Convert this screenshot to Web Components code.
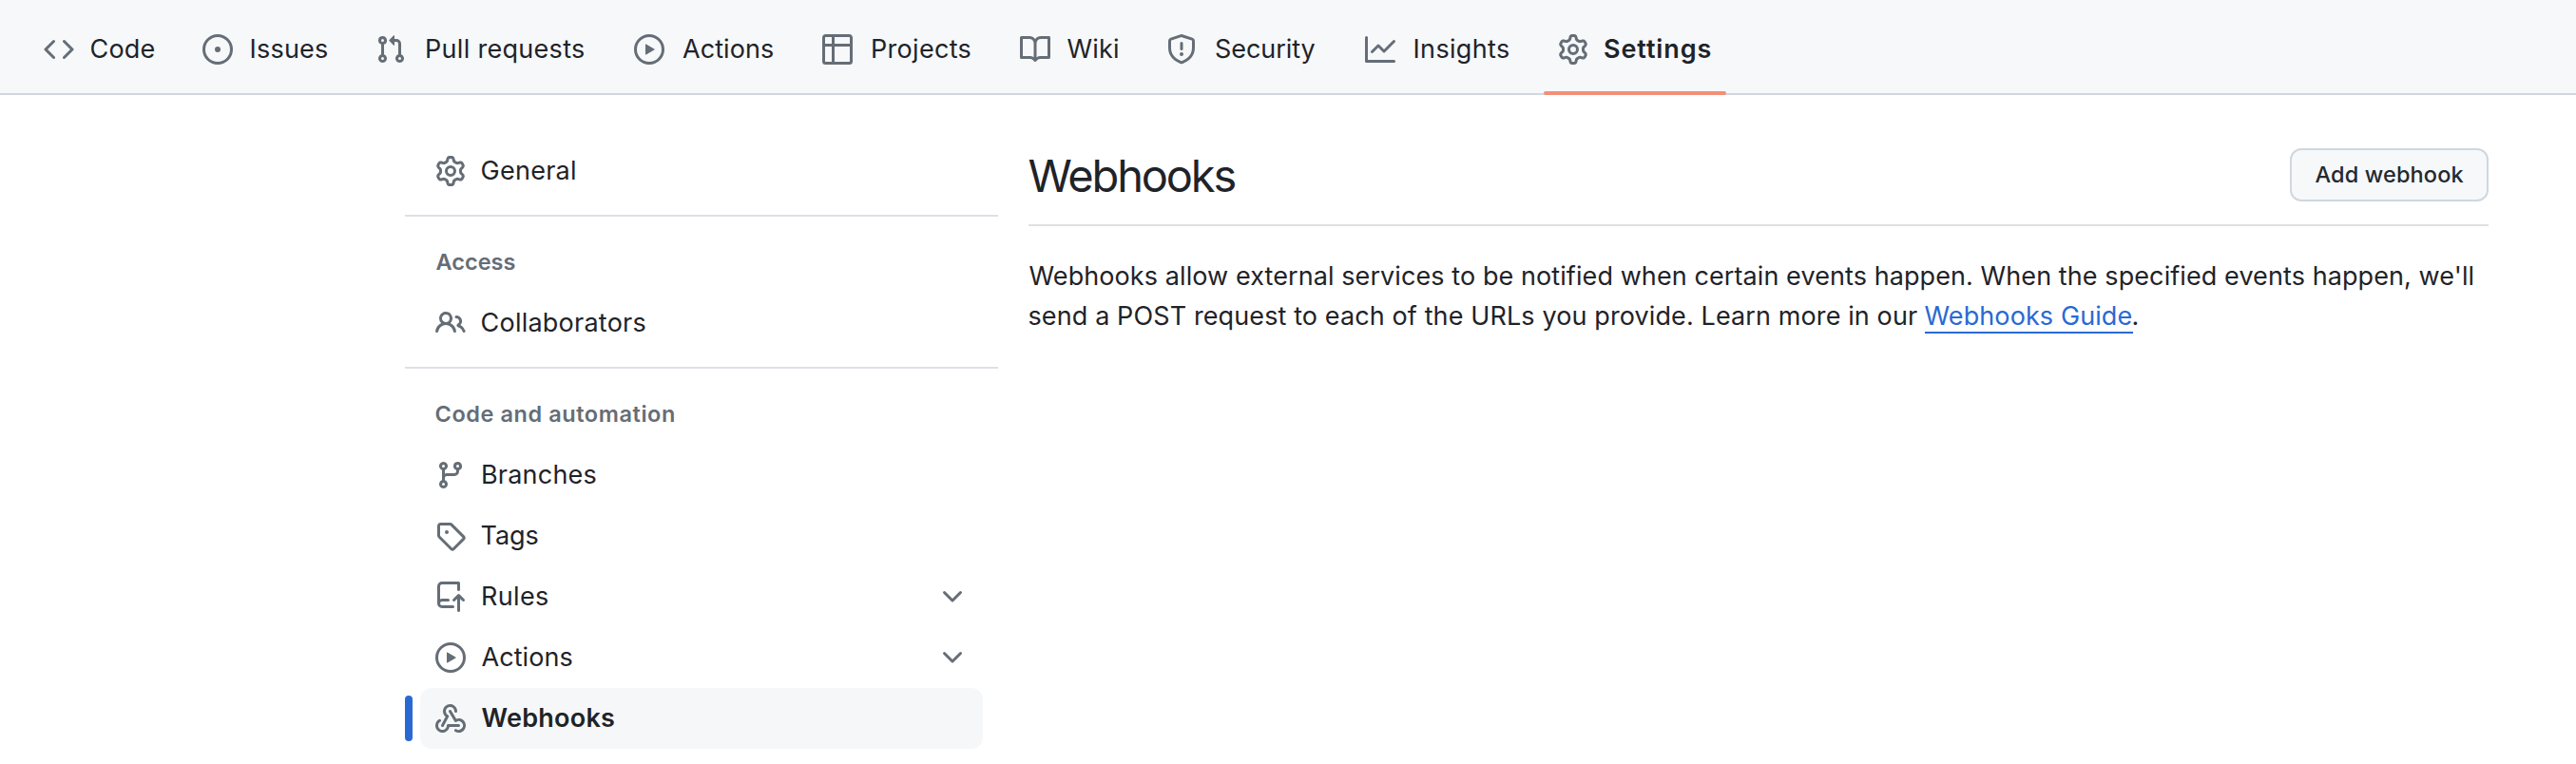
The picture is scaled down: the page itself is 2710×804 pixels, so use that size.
<!DOCTYPE html>
<html lang="en">
<head>
<meta charset="utf-8">
<title>Webhooks settings</title>
<style>
body { margin: 0; background: #fff; color: #1f2328; font-family: Inter, "Liberation Sans", sans-serif; }
</style>
</head>
<body>
<settings-page></settings-page>
<script>
const ICONS = {
  code: 'm11.28 3.22 4.25 4.25a.75.75 0 0 1 0 1.06l-4.25 4.25a.749.749 0 0 1-1.275-.326.749.749 0 0 1 .215-.734L13.94 8l-3.72-3.72a.749.749 0 0 1 .326-1.275.749.749 0 0 1 .734.215Zm-6.56 0a.751.751 0 0 1 1.042.018.751.751 0 0 1 .018 1.042L2.06 8l3.72 3.72a.749.749 0 0 1-.326 1.275.749.749 0 0 1-.734-.215L.47 8.53a.75.75 0 0 1 0-1.06Z',
  issue: 'M8 9.5a1.5 1.5 0 1 0 0-3 1.5 1.5 0 0 0 0 3ZM8 0a8 8 0 1 1 0 16A8 8 0 0 1 8 0ZM1.5 8a6.5 6.5 0 1 0 13 0 6.5 6.5 0 0 0-13 0Z',
  pull: 'M1.5 3.25a2.25 2.25 0 1 1 3 2.122v5.256a2.251 2.251 0 1 1-1.5 0V5.372A2.25 2.25 0 0 1 1.5 3.25Zm5.677-.177L9.573.677A.25.25 0 0 1 10 .854V2.5h1A2.5 2.5 0 0 1 13.5 5v5.628a2.251 2.251 0 1 1-1.5 0V5a1 1 0 0 0-1-1h-1v1.646a.25.25 0 0 1-.427.177L7.177 3.427a.25.25 0 0 1 0-.354ZM3.75 2.5a.75.75 0 1 0 0 1.5.75.75 0 0 0 0-1.5Zm0 9.5a.75.75 0 1 0 0 1.5.75.75 0 0 0 0-1.5Zm8.25.75a.75.75 0 1 0 1.5 0 .75.75 0 0 0-1.5 0Z',
  play: 'M8 0a8 8 0 1 1 0 16A8 8 0 0 1 8 0ZM1.5 8a6.5 6.5 0 1 0 13 0 6.5 6.5 0 0 0-13 0Zm4.879-2.773 4.264 2.559a.25.25 0 0 1 0 .428l-4.264 2.559A.25.25 0 0 1 6 10.559V5.442a.25.25 0 0 1 .379-.215Z',
  table: 'M0 1.75C0 .784.784 0 1.75 0h12.5C15.216 0 16 .784 16 1.75v12.5A1.75 1.75 0 0 1 14.25 16H1.75A1.75 1.75 0 0 1 0 14.25ZM6.5 6.5v8h7.75a.25.25 0 0 0 .25-.25V6.5Zm8-1.5V1.75a.25.25 0 0 0-.25-.25H6.5V5Zm-13 1.5v7.75c0 .138.112.25.25.25H5v-8ZM5 5V1.5H1.75a.25.25 0 0 0-.25.25V5Z',
  book: 'M0 1.75A.75.75 0 0 1 .75 1h4.253c1.227 0 2.317.59 3 1.501A3.743 3.743 0 0 1 11.006 1h4.245a.75.75 0 0 1 .75.75v10.5a.75.75 0 0 1-.75.75h-4.507a2.25 2.25 0 0 0-1.591.659l-.622.621a.75.75 0 0 1-1.06 0l-.622-.621A2.25 2.25 0 0 0 5.258 13H.75a.75.75 0 0 1-.75-.75Zm7.251 10.324.004-5.073-.002-2.253A2.25 2.25 0 0 0 5.003 2.5H1.5v9h3.757a3.75 3.75 0 0 1 1.994.574ZM8.755 4.75l-.004 7.322a3.752 3.752 0 0 1 1.992-.572H14.5v-9h-3.495a2.25 2.25 0 0 0-2.25 2.25Z',
  shield: 'M7.467.133a1.748 1.748 0 0 1 1.066 0l5.25 1.68A1.75 1.75 0 0 1 15 3.48V7c0 1.566-.32 3.182-1.303 4.682-.983 1.498-2.585 2.813-5.032 3.855a1.697 1.697 0 0 1-1.33 0c-2.447-1.042-4.049-2.357-5.032-3.855C1.32 10.182 1 8.566 1 7V3.48a1.75 1.75 0 0 1 1.217-1.667Zm.61 1.429a.25.25 0 0 0-.153 0l-5.25 1.68a.25.25 0 0 0-.174.238V7c0 1.358.275 2.666 1.057 3.86.784 1.194 2.121 2.34 4.366 3.297a.196.196 0 0 0 .154 0c2.245-.956 3.582-2.104 4.366-3.298C13.225 9.666 13.5 8.36 13.5 7V3.48a.251.251 0 0 0-.174-.237l-5.25-1.68ZM8.75 4.75v3a.75.75 0 0 1-1.5 0v-3a.75.75 0 0 1 1.5 0ZM9 10.5a1 1 0 1 1-2 0 1 1 0 0 1 2 0Z',
  graph: 'M1.5 1.75V13.5h13.75a.75.75 0 0 1 0 1.5H.75a.75.75 0 0 1-.75-.75V1.75a.75.75 0 0 1 1.5 0Zm14.28 2.53-5.25 5.25a.75.75 0 0 1-1.06 0L7 7.06 4.28 9.78a.751.751 0 0 1-1.042-.018.751.751 0 0 1-.018-1.042l3.25-3.25a.75.75 0 0 1 1.06 0L10 7.94l4.72-4.72a.751.751 0 0 1 1.042.018.751.751 0 0 1 .018 1.042Z',
  gear: 'M8 0a8.2 8.2 0 0 1 .701.031C9.444.095 9.99.645 10.16 1.29l.288 1.107c.018.066.079.158.212.224.231.114.454.243.668.386.123.082.233.09.299.071l1.103-.303c.644-.176 1.392.021 1.82.63.27.385.506.792.704 1.218.315.675.111 1.422-.364 1.891l-.814.806c-.049.048-.098.147-.088.294.016.257.016.515 0 .772-.01.147.038.246.088.294l.814.806c.475.469.679 1.216.364 1.891a7.977 7.977 0 0 1-.704 1.217c-.428.61-1.176.807-1.82.63l-1.102-.302c-.067-.019-.177-.011-.3.071a5.909 5.909 0 0 1-.668.386c-.133.066-.194.158-.211.224l-.29 1.106c-.168.646-.715 1.196-1.458 1.26a8.006 8.006 0 0 1-1.402 0c-.743-.064-1.289-.614-1.458-1.26l-.289-1.106c-.018-.066-.079-.158-.212-.224a5.738 5.738 0 0 1-.668-.386c-.123-.082-.233-.09-.299-.071l-1.103.303c-.644.176-1.392-.021-1.82-.63a8.12 8.12 0 0 1-.704-1.218c-.315-.675-.111-1.422.363-1.891l.815-.806c.05-.048.098-.147.088-.294a6.214 6.214 0 0 1 0-.772c.01-.147-.038-.246-.088-.294l-.815-.806C.635 6.045.431 5.298.746 4.623a7.92 7.92 0 0 1 .704-1.217c.428-.61 1.176-.807 1.82-.63l1.102.302c.067.019.177.011.3-.071.214-.143.437-.272.668-.386.133-.066.194-.158.211-.224l.29-1.106C6.009.645 6.556.095 7.299.03 7.53.01 7.764 0 8 0Zm-.571 1.525c-.036.003-.108.036-.137.146l-.289 1.105c-.147.561-.549.967-.998 1.189-.173.086-.34.183-.5.29-.417.278-.97.423-1.529.27l-1.103-.303c-.109-.03-.175.016-.195.045-.22.312-.412.644-.573.99-.014.031-.021.11.059.19l.815.806c.411.406.562.957.53 1.456a4.709 4.709 0 0 0 0 .582c.032.499-.119 1.05-.53 1.456l-.815.806c-.081.08-.073.159-.059.19.162.346.353.677.573.989.02.03.085.076.195.046l1.102-.303c.56-.153 1.113-.008 1.53.27.161.107.328.204.501.29.447.222.85.629.997 1.189l.289 1.105c.029.109.101.143.137.146a6.6 6.6 0 0 0 1.142 0c.036-.003.108-.036.137-.146l.289-1.105c.147-.561.549-.967.998-1.189.173-.086.34-.183.5-.29.417-.278.97-.423 1.529-.27l1.103.303c.109.029.175-.016.195-.045.22-.313.411-.644.573-.99.014-.031.021-.11-.059-.19l-.815-.806c-.411-.406-.562-.957-.53-1.456a4.709 4.709 0 0 0 0-.582c-.032-.499.119-1.05.53-1.456l.815-.806c.081-.08.073-.159.059-.19a6.464 6.464 0 0 0-.573-.989c-.02-.03-.085-.076-.195-.046l-1.102.303c-.56.153-1.113.008-1.53-.27a4.44 4.44 0 0 0-.501-.29c-.447-.222-.85-.629-.997-1.189l-.289-1.105c-.029-.11-.101-.143-.137-.146a6.6 6.6 0 0 0-1.142 0ZM11 8a3 3 0 1 1-6 0 3 3 0 0 1 6 0ZM9.5 8a1.5 1.5 0 1 0-3.001.001A1.5 1.5 0 0 0 9.5 8Z',
  people: 'M2 5.5a3.5 3.5 0 1 1 5.898 2.549 5.508 5.508 0 0 1 3.034 4.084.75.75 0 1 1-1.482.235 4 4 0 0 0-7.9 0 .75.75 0 0 1-1.482-.236A5.507 5.507 0 0 1 3.102 8.05 3.493 3.493 0 0 1 2 5.5ZM11 4a3.001 3.001 0 0 1 2.22 5.018 5.01 5.01 0 0 1 2.56 3.012.749.749 0 0 1-.885.954.752.752 0 0 1-.549-.514 3.507 3.507 0 0 0-2.522-2.372.75.75 0 0 1-.574-.73v-.352a.75.75 0 0 1 .416-.672A1.5 1.5 0 0 0 11 5.5.75.75 0 0 1 11 4Zm-5.5-.5a2 2 0 1 0-.001 3.999A2 2 0 0 0 5.5 3.5Z',
  branch: 'M9.5 3.25a2.25 2.25 0 1 1 3 2.122V6A2.5 2.5 0 0 1 10 8.5H6a1 1 0 0 0-1 1v1.128a2.251 2.251 0 1 1-1.5 0V5.372a2.25 2.25 0 1 1 1.5 0v1.836A2.493 2.493 0 0 1 6 7h4a1 1 0 0 0 1-1v-.628A2.25 2.25 0 0 1 9.5 3.25Zm-6 0a.75.75 0 1 0 1.5 0 .75.75 0 0 0-1.5 0Zm8.25-.75a.75.75 0 1 0 0 1.5.75.75 0 0 0 0-1.5ZM4.25 12a.75.75 0 1 0 0 1.5.75.75 0 0 0 0-1.5Z',
  tag: 'M1 7.775V2.75C1 1.784 1.784 1 2.75 1h5.025c.464 0 .91.184 1.238.513l6.25 6.25a1.75 1.75 0 0 1 0 2.474l-5.026 5.026a1.75 1.75 0 0 1-2.474 0l-6.25-6.25A1.752 1.752 0 0 1 1 7.775Zm1.5 0c0 .066.026.13.073.177l6.25 6.25a.25.25 0 0 0 .354 0l5.025-5.025a.25.25 0 0 0 0-.354l-6.25-6.25a.25.25 0 0 0-.177-.073H2.75a.25.25 0 0 0-.25.25ZM6 5a1 1 0 1 1 0 2 1 1 0 0 1 0-2Z',
  push: 'M1 2.5A2.5 2.5 0 0 1 3.5 0h8.75a.75.75 0 0 1 .75.75v3.5a.75.75 0 0 1-1.5 0V1.5h-8a1 1 0 0 0-1 1v6.708A2.493 2.493 0 0 1 3.5 9h3.25a.75.75 0 0 1 0 1.5H3.5a1 1 0 0 0 0 2h5.75a.75.75 0 0 1 0 1.5H3.5A2.5 2.5 0 0 1 1 11.5Zm13.23 7.79h-.001l-1.224-1.224v6.184a.75.75 0 0 1-1.5 0V9.066L10.28 10.29a.75.75 0 0 1-1.06-1.061l2.505-2.504a.75.75 0 0 1 1.06 0L15.29 9.23a.751.751 0 0 1-.018 1.042.751.751 0 0 1-1.042.018Z',
  webhook: 'M5.5 4.25a2.25 2.25 0 0 1 4.5 0 .75.75 0 0 0 1.5 0 3.75 3.75 0 1 0-6.14 2.889l-2.272 4.258a.75.75 0 0 0 1.324.706L7 7.25a.75.75 0 0 0-.309-1.015A2.25 2.25 0 0 1 5.5 4.25Z|M7.364 3.607a.75.75 0 0 1 1.03.257l2.608 4.349a3.75 3.75 0 1 1-.628 6.785.75.75 0 0 1 .752-1.299 2.25 2.25 0 1 0-.033-3.88.75.75 0 0 1-1.03-.256L7.107 4.636a.75.75 0 0 1 .257-1.03Z|M2.9 8.776A.75.75 0 0 1 2.625 9.8 2.25 2.25 0 1 0 6 11.75a.75.75 0 0 1 .75-.751h5.5a.75.75 0 0 1 0 1.5H7.425a3.751 3.751 0 1 1-5.55-3.998.75.75 0 0 1 1.024.274Z',
  chevron: 'M12.78 5.22a.749.749 0 0 1 0 1.06l-4.25 4.25a.749.749 0 0 1-1.06 0L3.22 6.28a.749.749 0 1 1 1.06-1.06L8 8.939l3.72-3.719a.749.749 0 0 1 1.06 0Z'
};

class OctIcon extends HTMLElement {
  connectedCallback() {
    const paths = ICONS[this.getAttribute('name')].split('|').map(d => `<path d="${d}"/>`).join('');
    this.attachShadow({ mode: 'open' }).innerHTML = `
      <style>:host { display: block; flex: none; width: 32px; height: 32px; color: #656d76; } svg { display: block; fill: currentColor; }</style>
      <svg viewBox="0 0 16 16" width="32" height="32" aria-hidden="true">${paths}</svg>`;
  }
}

// A single line of text whose visible glyphs span exactly `w` pixels.
const pen = document.createElement('canvas').getContext('2d');
class FitLabel extends HTMLElement {
  connectedCallback() {
    const size = this.getAttribute('size') || 27, weight = this.getAttribute('weight') || 400;
    const w = +this.getAttribute('w'), text = this.textContent;
    pen.font = `${weight} ${size}px Inter, "Liberation Sans", sans-serif`;
    const m = pen.measureText(text);
    const gap = (w - m.actualBoundingBoxLeft - m.actualBoundingBoxRight) / (text.length - 1);
    this.attachShadow({ mode: 'open' }).innerHTML = `
      <style>
        :host { display: block; flex: none; width: ${w}px; white-space: nowrap; }
        span { display: block; font-size: ${size}px; font-weight: ${weight}; line-height: var(--line, 42px); letter-spacing: ${gap}px; margin-left: ${m.actualBoundingBoxLeft}px; }
      </style><span><slot></slot></span>`;
  }
}

class RepoTab extends HTMLElement {
  connectedCallback() {
    const on = this.hasAttribute('selected');
    this.attachShadow({ mode: 'open' }).innerHTML = `
      <style>
        :host { display: flex; align-items: center; height: 100px; padding-top: 4px; box-sizing: border-box; position: relative; }
        fit-label { margin-left: ${this.getAttribute('gap')}px; }
        i { position: absolute; left: -15px; width: 192px; bottom: 0; height: 4px; border-radius: 2px; background: #f38f78; }
      </style>
      <oct-icon name="${this.getAttribute('icon')}"></oct-icon>
      <fit-label w="${this.getAttribute('w')}" weight="${on ? 600 : 400}">${this.getAttribute('label')}</fit-label>${on ? '<i></i>' : ''}`;
  }
}

class RepoNav extends HTMLElement {
  connectedCallback() {
    this.attachShadow({ mode: 'open' }).innerHTML = `
      <style>
        :host { display: block; background: linear-gradient(#d0d7de, #d0d7de) bottom / 100% 2px no-repeat #f6f8fa; height: 100px; }
        nav { display: grid; grid-template-columns: 167px 182px 272px 198px 208px 154px 209px 203px 192px; padding-left: 46px; }
      </style>
      <nav>
        <repo-tab icon="code" label="Code" gap="17.5" w="67"></repo-tab>
        <repo-tab icon="issue" label="Issues" gap="19.5" w="79.5"></repo-tab>
        <repo-tab icon="pull" label="Pull requests" gap="22" w="165"></repo-tab>
        <repo-tab icon="play" label="Actions" gap="19" w="95"></repo-tab>
        <repo-tab icon="table" label="Projects" gap="21" w="102.5"></repo-tab>
        <repo-tab icon="book" label="Wiki" gap="17.5" w="53.5"></repo-tab>
        <repo-tab icon="shield" label="Security" gap="20" w="104.5"></repo-tab>
        <repo-tab icon="graph" label="Insights" gap="20.5" w="98.5"></repo-tab>
        <repo-tab icon="gear" label="Settings" gap="17" w="111.5" selected></repo-tab>
      </nav>`;
  }
}

class SideItem extends HTMLElement {
  connectedCallback() {
    const on = this.hasAttribute('selected');
    this.attachShadow({ mode: 'open' }).innerHTML = `
      <style>
        :host { display: flex; align-items: center; position: relative; box-sizing: border-box; height: 64px; width: 592px; margin-left: 16px; padding: 0 16px; border-radius: 12px; background: ${on ? '#f5f7f9' : 'none'}; }
        fit-label { margin-left: ${this.getAttribute('gap') || 16.5}px; }
        .chev { margin-left: auto; }
        i { position: absolute; left: -16px; top: 8px; width: 8px; height: 48px; border-radius: 4px; background: #2969d4; }
      </style>
      ${on ? '<i></i>' : ''}
      <oct-icon name="${this.getAttribute('icon')}"></oct-icon>
      <fit-label w="${this.getAttribute('w')}" weight="${on ? 600 : 400}">${this.getAttribute('label')}</fit-label>
      ${this.hasAttribute('expandable') ? '<oct-icon class="chev" name="chevron"></oct-icon>' : ''}`;
  }
}

class SideNav extends HTMLElement {
  connectedCallback() {
    this.attachShadow({ mode: 'open' }).innerHTML = `
      <style>
        :host { display: block; width: 624px; }
        hr { border: 0; height: 2px; background: #dde1e6; margin: 14px 0 16px; }
        .head { color: #656d76; padding: 11px 0 12px 32.5px; --line: 41px; }
      </style>
      <side-item icon="gear" label="General" w="98.5"></side-item>
      <hr>
      <div class="head"><fit-label size="23.5" weight="600" w="83">Access</fit-label></div>
      <side-item icon="people" label="Collaborators" w="172"></side-item>
      <hr>
      <div class="head"><fit-label size="23.5" weight="600" w="250.5">Code and automation</fit-label></div>
      <side-item icon="branch" label="Branches" gap="18" w="118.5"></side-item>
      <side-item icon="tag" label="Tags" w="59"></side-item>
      <side-item icon="push" label="Rules" gap="18" w="68" expandable></side-item>
      <side-item icon="play" label="Actions" w="95" expandable></side-item>
      <side-item icon="webhook" label="Webhooks" w="139.5" selected></side-item>`;
  }
}

class WebhooksPanel extends HTMLElement {
  connectedCallback() {
    this.attachShadow({ mode: 'open' }).innerHTML = `
      <style>
        :host { display: block; width: 1536px; padding-top: 8px; }
        header { display: flex; justify-content: space-between; align-items: center; border-bottom: 2px solid #dde1e6; box-sizing: border-box; height: 82px; padding-bottom: 24px; }
        h1 { margin: 0 0 0 .5px; font: inherit; --line: 57px; }
        button { box-sizing: border-box; width: 209px; height: 56px; border: 2px solid #d0d7de; border-radius: 12px; background: #f6f8fa; color: #25292e; font: inherit; padding: 0 0 0 24.5px; text-align: left; }
        .row { display: flex; margin-left: .5px; }
        .body { padding-top: 32px; }
        a { color: #2969d4; text-decoration: none; margin-left: 7.5px; position: relative; }
        a::after { content: ""; position: absolute; left: 0; right: -1px; bottom: 3px; height: 2px; background: currentColor; }
        .dot { font-size: 27px; line-height: 42px; }
      </style>
      <header>
        <h1><fit-label size="47" w="217">Webhooks</fit-label></h1>
        <button><fit-label size="23.5" weight="500" w="156">Add webhook</fit-label></button>
      </header>
      <div class="body">
        <div class="row"><fit-label w="1519">Webhooks allow external services to be notified when certain events happen. When the specified events happen, we'll</fit-label></div>
        <div class="row"><fit-label w="934.5">send a POST request to each of the URLs you provide. Learn more in our</fit-label><a href="#"><fit-label w="218">Webhooks Guide</fit-label></a><span class="dot">.</span></div>
      </div>`;
  }
}

class SettingsPage extends HTMLElement {
  connectedCallback() {
    this.attachShadow({ mode: 'open' }).innerHTML = `
      <style>
        :host { display: block; height: 804px; overflow: hidden; }
        main { display: flex; gap: 32px; padding: 48px 0 0 426px; }
      </style>
      <repo-nav></repo-nav>
      <main><side-nav></side-nav><webhooks-panel></webhooks-panel></main>`;
  }
}

customElements.define('oct-icon', OctIcon);
customElements.define('fit-label', FitLabel);
customElements.define('repo-tab', RepoTab);
customElements.define('repo-nav', RepoNav);
customElements.define('side-item', SideItem);
customElements.define('side-nav', SideNav);
customElements.define('webhooks-panel', WebhooksPanel);
customElements.define('settings-page', SettingsPage);
</script>
</body>
</html>
